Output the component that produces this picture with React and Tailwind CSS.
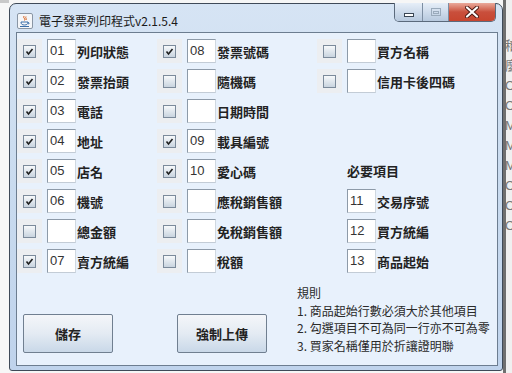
import React from 'react';

const cjk = { fontFamily: '"Noto Sans CJK TC", "Noto Sans CJK SC", sans-serif' };
const latin = { fontFamily: '"Liberation Sans", "Noto Sans CJK TC", sans-serif' };

const CheckBox = ({ on }) => (
    <div className="w-[13px] h-[13px] border border-[#7b8a9b] bg-gradient-to-b from-[#f7f9fb] to-[#c9d4df] flex items-center justify-center">
        {on && (
            <svg width="9" height="9" viewBox="0 0 9 9">
                <path d="M1.5 4.5 L3.5 7 L7.5 2" fill="none" stroke="#1f1f1f" strokeWidth="1.6" />
            </svg>
        )}
    </div>
);

const Field = ({ box, on, num, label }) => (
    <div className="flex items-center h-6">
        {box ? (
            <div className="w-[25px] h-6 bg-[#eceef1] flex items-center justify-center">
                <CheckBox on={on} />
            </div>
        ) : (
            <div className="w-[25px] h-6" />
        )}
        <div
            className="ml-[5px] w-[29px] h-6 bg-white border border-[#8d9aa8] border-r-[#d0d8e0] border-b-[#c3ccd6] flex items-center pl-[2px] text-[13px] text-[#333]"
            style={latin}
        >
            {num}
        </div>
        <span className="ml-px text-[13px] font-bold text-[#222] leading-none" style={cjk}>
            {label}
        </span>
    </div>
);

const Heading = ({ text }) => (
    <div className="flex items-center h-6 pl-[30px]">
        <span className="text-[13px] font-bold text-[#222]" style={cjk}>
            {text}
        </span>
    </div>
);

const Empty = () => <div className="h-6" />;

const grid = [
    [
        <Field box on num="01" label="列印狀態" />,
        <Field box on num="08" label="發票號碼" />,
        <Field box num="" label="買方名稱" />,
    ],
    [
        <Field box on num="02" label="發票抬頭" />,
        <Field box num="" label="隨機碼" />,
        <Field box num="" label="信用卡後四碼" />,
    ],
    [<Field box on num="03" label="電話" />, <Field box num="" label="日期時間" />, <Empty />],
    [<Field box on num="04" label="地址" />, <Field box on num="09" label="載具編號" />, <Empty />],
    [<Field box on num="05" label="店名" />, <Field box on num="10" label="愛心碼" />, <Heading text="必要項目" />],
    [
        <Field box on num="06" label="機號" />,
        <Field box num="" label="應稅銷售額" />,
        <Field num="11" label="交易序號" />,
    ],
    [
        <Field box num="" label="總金額" />,
        <Field box num="" label="免稅銷售額" />,
        <Field num="12" label="買方統編" />,
    ],
    [<Field box on num="07" label="賣方統編" />, <Field box num="" label="稅額" />, <Field num="13" label="商品起始" />],
];

const Button = ({ children }) => (
    <button
        className="w-[90px] h-[39px] border border-[#707f90] rounded-[2px] bg-gradient-to-b from-[#f4f6f9] via-[#e4ebf3] to-[#c9d8e8] text-[13px] font-bold text-[#222]"
        style={cjk}
    >
        {children}
    </button>
);

const JavaIcon = () => (
    <svg width="16" height="16" viewBox="0 0 16 16">
        <rect x="0.5" y="0.5" width="15" height="15" rx="1.5" fill="#f4f6f9" stroke="#8a96a4" />
        <path d="M7 3 C5.5 5 9 5.5 7.5 7.5 M9 3.5 C8 5 10 5.5 9 7" fill="none" stroke="#d8611c" strokeWidth="1" />
        <path d="M4 9 H11 C11 11 10 12 7.5 12 C5 12 4 11 4 9 Z M11 9.5 C12.5 9.5 12.5 11 11 11" fill="none" stroke="#3b6ea8" strokeWidth="1" />
        <path d="M3 13.5 H12" stroke="#3b6ea8" strokeWidth="1" />
    </svg>
);

const WinButtons = () => (
    <div className="flex h-[19px] rounded-b-[5px] border border-t-0 border-[#5b6a7c] overflow-hidden">
        <div className="w-[28px] bg-gradient-to-b from-[#e6eef8] to-[#b7c9de] border-r border-[#7d8ea2] flex items-center justify-center">
            <div className="w-[10px] h-[4px] mt-[5px] bg-white border border-[#3a4654]" />
        </div>
        <div className="w-[26px] bg-gradient-to-b from-[#e6eef8] to-[#b7c9de] border-r border-[#7d8ea2] flex items-center justify-center">
            <div className="w-[10px] h-[8px] border border-[#9aaabb] flex items-center justify-center">
                <div className="w-[6px] h-[3px] border border-[#9aaabb]" />
            </div>
        </div>
        <div className="w-[46px] bg-gradient-to-b from-[#e9a99b] via-[#c94f3c] to-[#c7452f] flex items-center justify-center">
            <svg width="14" height="12" viewBox="0 0 14 12">
                <path d="M2 1.5 L12 10.5 M12 1.5 L2 10.5" stroke="#4a1a14" strokeWidth="4" strokeLinecap="round" />
                <path d="M2 1.5 L12 10.5 M12 1.5 L2 10.5" stroke="#ffffff" strokeWidth="2.2" strokeLinecap="round" />
            </svg>
        </div>
    </div>
);

const sideLetters = ['稽', '麼', 'C', 'C', 'M', 'M', 'M', 'C', 'C', 'C'];

export default function App() {
    return (
        <div className="w-[512px] h-[373px] flex bg-[#f6f6f6] overflow-hidden">
            {/* left desktop strip */}
            <div className="w-[9px] shrink-0 bg-[#f7f7f7]">
                <div className="h-[3px] bg-[#c9c9c9]" />
            </div>

            {/* main window */}
            <div className="w-[494px] shrink-0 mt-[3px] h-[368px] flex flex-col border border-[#3f4a58] rounded-t-[7px] rounded-b-[3px] bg-gradient-to-b from-[#d6e4f4] via-[#c9dbef] to-[#bfd3ec] pl-[6px] pr-[4px] pb-[4px]">
                <div className="h-[28px] flex items-start">
                    <div className="flex items-center mt-[8px] ml-[1px]">
                        <JavaIcon />
                        <span className="ml-[6px] text-[12px] text-[#1a1a1a]" style={cjk}>
                            電子發票列印程式v2.1.5.4
                        </span>
                    </div>
                    <div className="ml-auto mr-[2px] -mt-px">
                        <WinButtons />
                    </div>
                </div>

                <div className="flex-1 border border-[#6c7d90] bg-[#e8f1fc] pt-[6px] flex flex-col">
                    <div className="grid grid-cols-[140px_160px_1fr] gap-y-[6px]">
                        {grid.map((row, i) => row.map((cell, j) => <React.Fragment key={`${i}-${j}`}>{cell}</React.Fragment>))}
                    </div>

                    <div className="flex items-end mt-[11px]">
                        <div className="ml-[6px] mb-[1px] flex gap-[64px]">
                            <Button>儲存</Button>
                            <Button>強制上傳</Button>
                        </div>
                        <div className="ml-[30px] text-[12px] leading-[17.5px] text-[#2a2a2a]" style={cjk}>
                            <div>規則</div>
                            <div>1. 商品起始行數必須大於其他項目</div>
                            <div>2. 勾選項目不可為同一行亦不可為零</div>
                            <div>3. 買家名稱僅用於折讓證明聯</div>
                        </div>
                    </div>
                </div>
            </div>

            {/* window behind, on the right */}
            <div className="w-[9px] shrink-0 border-l-[3px] border-[#6f6f6f] bg-[#f0f0f0] overflow-hidden">
                <div className="pt-[36px] flex flex-col text-[13px] leading-[20px] text-[#777] whitespace-nowrap" style={latin}>
                    {sideLetters.map((t, i) => (
                        <span key={i} className="-ml-[1px]">
                            {t}
                        </span>
                    ))}
                </div>
            </div>
        </div>
    );
}
